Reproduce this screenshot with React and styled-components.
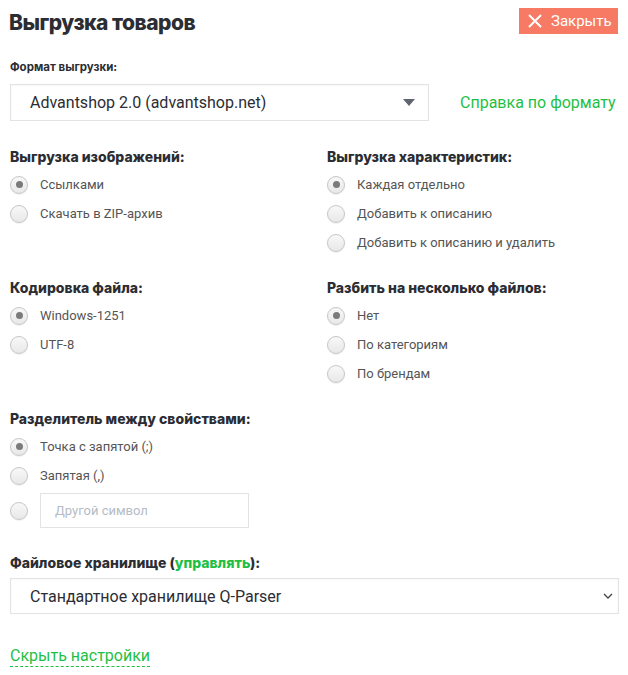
import React from 'react'
import styled, { createGlobalStyle } from 'styled-components'

const GlobalStyle = createGlobalStyle`
  body {
    margin: 0;
    background: #fff;
    font-family: Roboto, "Liberation Sans", sans-serif;
    color: #2b2d33;
  }
`

const GREEN = '#1fbf46'

const Page = styled.div`
  width: 628px;
  padding: 8px 10px 0 10px;
  box-sizing: border-box;
`

const TitleRow = styled.div`
  display: flex;
  justify-content: space-between;
  align-items: center;
  height: 26px;
`

const Title = styled.h1`
  margin: 2px 0 0 -1px;
  font-family: Inter, "Noto Sans", sans-serif;
  font-weight: 800;
  font-size: 21px;
  letter-spacing: -0.5px;
  color: #2b2d33;
`

const CloseButton = styled.button`
  display: flex;
  align-items: center;
  gap: 9px;
  height: 26px;
  width: 99px;
  padding: 0 0 0 9px;
  border: 0;
  background: #f77a64;
  color: #fff;
  font-family: Roboto, sans-serif;
  font-size: 15px;
`

const Label = styled.div`
  margin-top: 26px;
  font-family: Inter, "Noto Sans", sans-serif;
  font-weight: 700;
  font-size: 11.5px;
  line-height: 14px;
`

const FormatRow = styled.div`
  display: flex;
  align-items: center;
  gap: 31px;
  margin-top: 10px;
`

const Select = styled.div`
  display: flex;
  align-items: center;
  justify-content: space-between;
  box-sizing: border-box;
  width: ${p => p.$width};
  height: ${p => p.$height}px;
  padding: 0 ${p => p.$padRight}px 0 19px;
  border: 1px solid #e3e3e3;
  box-shadow: inset 0 1px 2px rgba(0, 0, 0, 0.03);
  font-size: 16px;
  color: #2b2d33;
`

const Link = styled.a`
  color: ${GREEN};
  text-decoration: none;
  font-size: ${p => p.$size || 16}px;
`

const DashedLink = styled(Link)`
  display: inline-block;
  border-bottom: 1px dashed ${GREEN};
  line-height: 20px;
`

const Grid = styled.div`
  display: grid;
  grid-template-columns: 317px 1fr;
  row-gap: 21px;
  margin-top: 26px;
`

const Section = styled.div`
  display: flex;
  flex-direction: column;
`

const SectionTitle = styled.div`
  font-family: Inter, "Noto Sans", sans-serif;
  font-weight: 800;
  font-size: 14px;
  line-height: 20px;
  margin-bottom: 3px;
  color: #2b2d33;
`

const RadioRow = styled.label`
  display: flex;
  align-items: center;
  gap: 12px;
  height: ${p => p.$height || 29}px;
  margin-top: ${p => p.$mt || 0}px;
  font-size: 13px;
  color: #555;
`

const Circle = styled.span`
  position: relative;
  width: 18px;
  height: 18px;
  box-sizing: border-box;
  border-radius: 50%;
  border: 1px solid #c6c6c6;
  background: linear-gradient(#f8f8f8, #e8e8e8);
  box-shadow: 0 1px 1px rgba(0, 0, 0, 0.06);
  flex-shrink: 0;
  &::after {
    content: '';
    display: ${p => (p.$checked ? 'block' : 'none')};
    position: absolute;
    left: 4.5px;
    top: 4.5px;
    width: 7px;
    height: 7px;
    border-radius: 50%;
    background: #7a7a7a;
  }
`

const TextInput = styled.input`
  box-sizing: border-box;
  width: 209px;
  height: 35px;
  border: 1px solid #e3e3e3;
  padding: 0 14px;
  font-family: Roboto, sans-serif;
  font-size: 13px;
  outline: none;
  &::placeholder {
    color: #b5bcc6;
  }
`

const StorageTitle = styled(SectionTitle)`
  margin-top: 25px;
  margin-bottom: 5px;
`

const Footer = styled.div`
  margin-top: 32px;
`

const Radio = ({ checked, children, ...rest }) => (
  <RadioRow {...rest}>
    <Circle $checked={checked} />
    {children}
  </RadioRow>
)

const App = () => {
  return (
    <>
      <GlobalStyle />
      <Page>
        <TitleRow>
          <Title>Выгрузка товаров</Title>
          <CloseButton>
            <svg width="14" height="14" viewBox="0 0 14 14">
              <path d="M1 1L13 13M13 1L1 13" stroke="#fff" strokeWidth="2" />
            </svg>
            Закрыть
          </CloseButton>
        </TitleRow>

        <Label>Формат выгрузки:</Label>
        <FormatRow>
          <Select $width="419px" $height={37} $padRight={13}>
            Advantshop 2.0 (advantshop.net)
            <svg width="12" height="7" viewBox="0 0 12 7">
              <path d="M0 0H12L6 7Z" fill="#5f6470" />
            </svg>
          </Select>
          <Link href="#">Справка по формату</Link>
        </FormatRow>

        <Grid>
          <Section>
            <SectionTitle>Выгрузка изображений:</SectionTitle>
            <Radio checked>Ссылками</Radio>
            <Radio>Скачать в ZIP-архив</Radio>
          </Section>
          <Section>
            <SectionTitle>Выгрузка характеристик:</SectionTitle>
            <Radio checked>Каждая отдельно</Radio>
            <Radio>Добавить к описанию</Radio>
            <Radio>Добавить к описанию и удалить</Radio>
          </Section>
          <Section>
            <SectionTitle>Кодировка файла:</SectionTitle>
            <Radio checked>Windows-1251</Radio>
            <Radio>UTF-8</Radio>
          </Section>
          <Section>
            <SectionTitle>Разбить на несколько файлов:</SectionTitle>
            <Radio checked>Нет</Radio>
            <Radio>По категориям</Radio>
            <Radio>По брендам</Radio>
          </Section>
          <Section>
            <SectionTitle>Разделитель между свойствами:</SectionTitle>
            <Radio checked>Точка с запятой (;)</Radio>
            <Radio>Запятая (,)</Radio>
            <Radio $height={35} $mt={3}>
              <TextInput placeholder="Другой символ" />
            </Radio>
          </Section>
        </Grid>

        <StorageTitle>
          Файловое хранилище (<Link href="#" $size={14}>управлять</Link>):
        </StorageTitle>
        <Select $width="609px" $height={36} $padRight={5}>
          Стандартное хранилище Q-Parser
          <svg width="10" height="6" viewBox="0 0 10 6">
            <path d="M1 1L5 5L9 1" stroke="#444" strokeWidth="1.3" fill="none" />
          </svg>
        </Select>

        <Footer>
          <DashedLink href="#" $size={16}>Скрыть настройки</DashedLink>
        </Footer>
      </Page>
    </>
  )
}

export default App
